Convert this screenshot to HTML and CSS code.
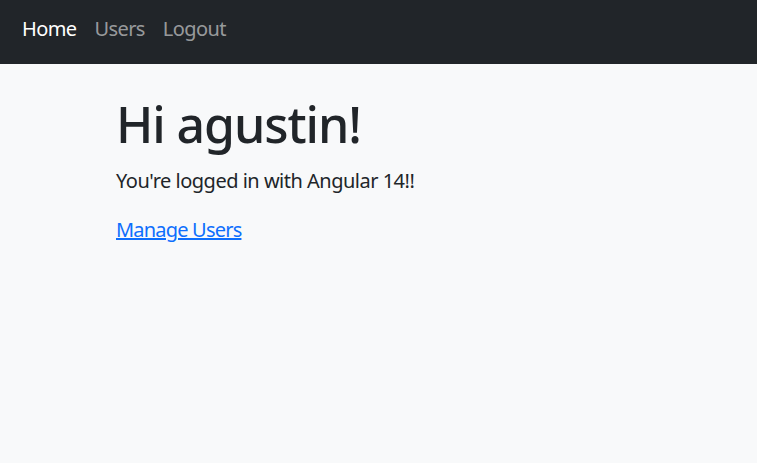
FILE: index.html
```html
<!DOCTYPE html>
<html lang="en">
<head>
<meta charset="utf-8">
<title>Home</title>
<link rel="stylesheet" href="styles.css">
</head>
<body>
<nav class="navbar">
  <a class="nav-link active" href="#">Home</a>
  <a class="nav-link" href="#">Users</a>
  <a class="nav-link logout" href="#">Logout</a>
</nav>
<main class="app">
  <div class="container">
    <h1 class="title">Hi agustin!</h1>
    <p class="lead-text">You're logged in with Angular 14!!</p>
    <p class="links"><a class="manage" href="#">Manage Users</a></p>
  </div>
</main>
</body>
</html>
```

FILE: styles.css
```css
* { box-sizing: border-box; }
html, body { margin: 0; padding: 0; background: #fff; }
body {
  font-family: "Noto Sans", "Open Sans", sans-serif;
  color: #212529;
  font-size: 20px;
}
.navbar {
  height: 64px;
  background: #212529;
  display: flex;
  align-items: center;
  padding-left: 22px;
  gap: 18px;
}
.nav-link {
  font-size: 20px;
  letter-spacing: -0.6px;
  color: rgba(255,255,255,0.55);
  text-decoration: none;
  line-height: 30px;
  padding-bottom: 7px;
}
.nav-link.active { color: #fff; }
.app {
  background: #f8f9fa;
  height: 399px;
}
.container {
  padding: 30px 0 0 116px;
}
.title {
  margin: 0 0 12px;
  font-size: 50px;
  font-weight: 500;
  letter-spacing: -1.1px;
  line-height: 60px;
}
.lead-text {
  margin: 0 0 19px;
  line-height: 30px;
  letter-spacing: -0.5px;
}
.links { margin: 0; line-height: 30px; letter-spacing: -0.8px; }
.manage { color: #0d6efd; text-decoration: underline; }
```
